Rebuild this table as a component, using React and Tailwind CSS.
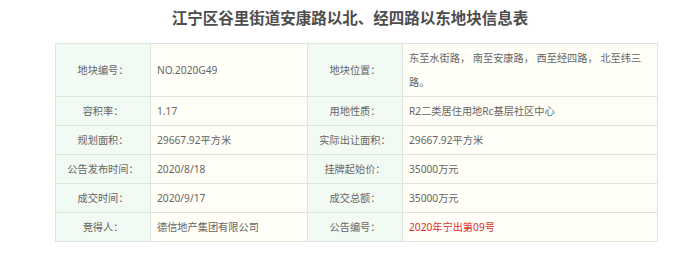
const rows = [
  ['公告发布时间：', '2020/8/18', '挂牌起始价：', '35000万元'],
  ['成交时间：', '2020/9/17', '成交总额：', '35000万元'],
]

function Label({ children }) {
  return (
    <td className="border border-[#dde6dd] bg-[#f1faf3] px-[4px] py-[2px] text-center align-middle">
      {children}
    </td>
  )
}

function Value({ children, className = '' }) {
  return (
    <td className={`border border-[#dde6dd] bg-[#fffef7] py-[2px] pl-[6px] pr-[4px] text-left align-middle ${className}`}>
      {children}
    </td>
  )
}

export default function App() {
  return (
    <div
      className="h-[260px] w-[700px] bg-white text-[#666]"
      style={{ fontFamily: '"Noto Sans", "Noto Sans CJK SC", sans-serif' }}
    >
      <h1 className="pt-[6px] text-center text-[15.5px] font-bold leading-[24px] text-[#4d4d4d]">
        江宁区谷里街道安康路以北、经四路以东地块信息表
      </h1>
      <div className="mt-[13px] pl-[55px]">
        <table className="w-[602px] table-fixed border-collapse text-[10.2px] leading-[24px]">
          <colgroup>
            <col className="w-[95px]" />
            <col className="w-[157px]" />
            <col className="w-[95px]" />
            <col className="w-[255px]" />
          </colgroup>
          <tbody>
            <tr>
              <Label>地块编号：</Label>
              <Value>NO.2020G49</Value>
              <Label>地块位置：</Label>
              <Value className="whitespace-pre">
                {'东至水街路， 南至安康路， 西至经四路， 北至纬三'}
                <br />
                路。
              </Value>
            </tr>
            <tr>
              <Label>容积率：</Label>
              <Value>1.17</Value>
              <Label>用地性质：</Label>
              <Value>R2二类居住用地Rc基层社区中心</Value>
            </tr>
            <tr>
              <Label>规划面积：</Label>
              <Value>29667.92平方米</Value>
              <Label>实际出让面积：</Label>
              <Value>29667.92平方米</Value>
            </tr>
            {rows.map((r) => (
              <tr key={r[0]}>
                <Label>{r[0]}</Label>
                <Value>{r[1]}</Value>
                <Label>{r[2]}</Label>
                <Value>{r[3]}</Value>
              </tr>
            ))}
            <tr>
              <Label>竞得人：</Label>
              <Value>德信地产集团有限公司</Value>
              <Label>公告编号：</Label>
              <Value className="text-[#e3302a]">2020年宁出第09号</Value>
            </tr>
          </tbody>
        </table>
      </div>
    </div>
  )
}
